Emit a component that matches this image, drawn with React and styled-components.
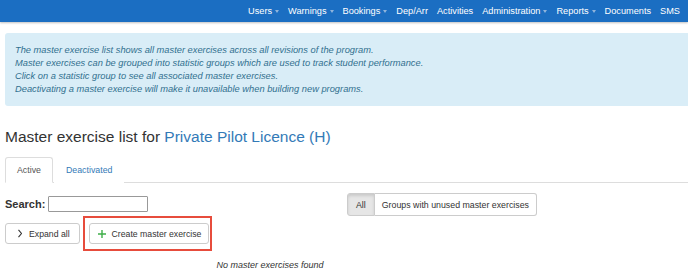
import React from "react";
import styled, { createGlobalStyle } from "styled-components";

const GlobalStyle = createGlobalStyle`
  body {
    margin: 0;
    font-family: "Liberation Sans", Arial, sans-serif;
    background: #fff;
    color: #333;
    overflow: hidden;
  }
  * { box-sizing: border-box; }
`;

const NavBar = styled.div`
  height: 22px;
  background: #1b6ec2;
  box-shadow: 0 1px 2px rgba(0, 0, 0, 0.25);
  display: flex;
  justify-content: flex-end;
  align-items: center;
  padding-right: 8px;
  gap: 9px;
`;

const NavItem = styled.span`
  color: #fff;
  font-size: 9.2px;
  display: flex;
  align-items: center;
  gap: 3px;
  white-space: nowrap;
`;

const Caret = styled.span`
  width: 0;
  height: 0;
  border-left: 2.5px solid transparent;
  border-right: 2.5px solid transparent;
  border-top: 3px solid #8fb4dc;
`;

const Page = styled.div`
  padding: 11px 0 0 5px;
`;

const InfoBox = styled.div`
  background: #d9edf7;
  border-radius: 3px;
  margin-right: -10px;
  padding: 10.5px 10px 9.5px 10px;
  color: #31708f;
  font-style: italic;
  font-size: 9.3px;
  line-height: 13.3px;
`;

const Title = styled.h1`
  margin: 21px 0 0 0;
  font-size: 15.5px;
  font-weight: normal;
  color: #333;
  line-height: 20px;
`;

const TitleLink = styled.span`
  color: #337ab7;
`;

const Tabs = styled.div`
  display: flex;
  margin-top: 10px;
  border-bottom: 1px solid #ddd;
  margin-right: -5px;
`;

const Tab = styled.div`
  font-size: 8.8px;
  padding: 7px 11px;
  height: 26px;
  line-height: 10px;
  margin-bottom: -1px;
  border: 1px solid ${(p) => (p.active ? "#ddd" : "transparent")};
  border-bottom-color: ${(p) => (p.active ? "#fff" : "transparent")};
  border-radius: 3px 3px 0 0;
  background: #fff;
  color: ${(p) => (p.active ? "#555" : "#337ab7")};
  margin-right: 1px;
`;

const Toolbar = styled.div`
  display: grid;
  grid-template-columns: 342px auto;
  margin-top: 10px;
`;

const LeftCol = styled.div`
  display: flex;
  flex-direction: column;
`;

const SearchRow = styled.div`
  display: flex;
  align-items: center;
  gap: 3px;
  margin-top: 3px;
`;

const Label = styled.label`
  font-weight: bold;
  font-size: 11px;
  color: #333;
`;

const SearchInput = styled.input`
  width: 100px;
  height: 16px;
  border: 1px solid #999;
  border-radius: 1px;
  padding: 1px 2px;
  font-size: 10px;
`;

const ButtonRow = styled.div`
  display: flex;
  align-items: center;
  margin-top: 4px;
`;

const Button = styled.button`
  font-family: inherit;
  font-size: 8.7px;
  color: #333;
  background: #fff;
  border: 1px solid #ccc;
  border-radius: 3px;
  height: 21px;
  padding: 0 ${(p) => p.pr}px 0 ${(p) => p.pl}px;
  display: flex;
  align-items: center;
  gap: ${(p) => p.gap}px;
  white-space: nowrap;
  cursor: pointer;
`;

const Highlight = styled.div`
  border: 2px solid #e74c3c;
  padding: 5px 1px 5px 4px;
  margin-left: 3px;
`;

const ToggleGroup = styled.div`
  display: flex;
  align-self: start;
`;

const Toggle = styled.button`
  font-family: inherit;
  font-size: 8.8px;
  color: #333;
  height: 23px;
  padding: 0 ${(p) => (p.first ? "8px" : "7px")};
  border: 1px solid #ccc;
  border-left-width: ${(p) => (p.first ? "1px" : "0")};
  border-radius: ${(p) => (p.first ? "3px 0 0 3px" : "0 3px 3px 0")};
  background: ${(p) => (p.active ? "#e6e6e6" : "#fff")};
  box-shadow: ${(p) => (p.active ? "inset 0 2px 3px rgba(0,0,0,0.12)" : "none")};
`;

const Empty = styled.div`
  margin-top: 9px;
  width: 530px;
  text-align: center;
  font-style: italic;
  font-size: 9px;
  color: #333;
`;

export default function App() {
  const nav = [
    ["Users", true],
    ["Warnings", true],
    ["Bookings", true],
    ["Dep/Arr", false],
    ["Activities", false],
    ["Administration", true],
    ["Reports", true],
    ["Documents", false],
    ["SMS", false],
  ];
  return (
    <>
      <GlobalStyle />
      <NavBar>
        {nav.map(([name, caret]) => (
          <NavItem key={name}>
            {name}
            {caret && <Caret />}
          </NavItem>
        ))}
      </NavBar>
      <Page>
        <InfoBox>
          The master exercise list shows all master exercises across all revisions of the program.
          <br />
          Master exercises can be grouped into statistic groups which are used to track student performance.
          <br />
          Click on a statistic group to see all associated master exercises.
          <br />
          Deactivating a master exercise will make it unavailable when building new programs.
        </InfoBox>
        <Title>
          Master exercise list for <TitleLink>Private Pilot Licence (H)</TitleLink>
        </Title>
        <Tabs>
          <Tab active>Active</Tab>
          <Tab>Deactivated</Tab>
        </Tabs>
        <Toolbar>
          <LeftCol>
            <SearchRow>
              <Label>Search:</Label>
              <SearchInput />
            </SearchRow>
            <ButtonRow>
              <Button pl={12} pr={9} gap={7}>
                <svg width="4" height="9" viewBox="0 0 4 9">
                  <path d="M0.5 0.8l3 3.7L0.5 8.2" fill="none" stroke="#333" strokeWidth="1.1" />
                </svg>
                Expand all
              </Button>
              <Highlight>
                <Button pl={8} pr={7} gap={6}>
                  <svg width="8" height="8" viewBox="0 0 8 8">
                    <path d="M4 0v8M0 4h8" stroke="#3fae49" strokeWidth="1.4" />
                  </svg>
                  Create master exercise
                </Button>
              </Highlight>
            </ButtonRow>
          </LeftCol>
          <ToggleGroup>
            <Toggle first active>All</Toggle>
            <Toggle>Groups with unused master exercises</Toggle>
          </ToggleGroup>
        </Toolbar>
        <Empty>No master exercises found</Empty>
      </Page>
    </>
  );
}
